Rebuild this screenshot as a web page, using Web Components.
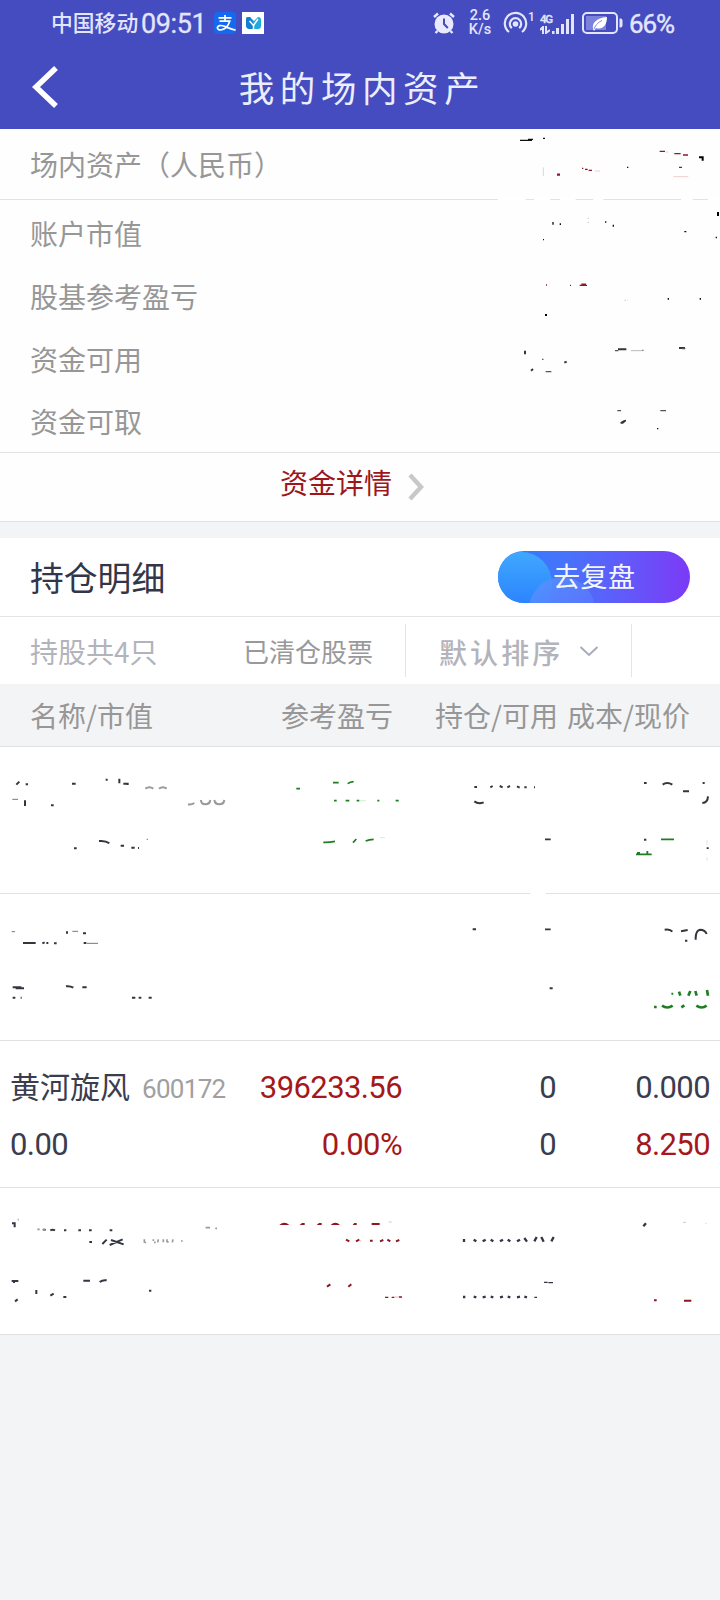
<!DOCTYPE html>
<html lang="zh-CN">
<head>
<meta charset="utf-8">
<title>我的场内资产</title>
<style>
html,body{margin:0;padding:0}
body{width:720px;height:1600px;overflow:hidden;background:#f3f4f6;font-family:Roboto,"Noto Sans CJK SC",sans-serif;color:#3a3d4e}
</style>
</head>
<body>
<asset-page></asset-page>
<script>
const define = (name, html) => {
  const t = document.createElement('template');
  t.innerHTML = html;
  customElements.define(name, class extends HTMLElement {
    constructor() {
      super();
      this.attachShadow({ mode: 'open' }).append(t.content.cloneNode(true));
    }
  });
};

define('status-bar', `
<style>
:host{display:flex;height:46px;padding-left:51px;align-items:center;color:#e3e5fd;box-sizing:border-box;white-space:nowrap}
span,svg{flex:none;display:block}
.op{width:90px;font:500 21.8px/30px "Noto Sans CJK SC",sans-serif;margin-top:-2px}
.time{width:73px;font:400 27px/30px Roboto,sans-serif;letter-spacing:-.4px;-webkit-text-stroke:.3px;margin-top:1px}
.rate{width:28px;margin-left:2px;text-align:center;font:500 14.5px/14.5px Roboto,sans-serif;margin-right:2px}
.rate span{height:14.5px}
.net{width:12px;display:flex;flex-direction:column}
.net span{font:500 11.5px/12px Roboto,sans-serif;letter-spacing:-1.3px;-webkit-text-stroke:.3px}
.one{font:500 12px/12px Roboto,sans-serif;width:12px;align-self:flex-start;margin-top:11px}
.pct{font:400 26px/30px Roboto,sans-serif;letter-spacing:-1.1px;-webkit-text-stroke:.4px;margin-top:2px}
</style>
<span class="op">中国移动</span><span class="time">09:51</span>
<svg width="22" height="22" viewBox="0 0 22 22"><rect width="22" height="22" rx="4" fill="#1669ef"/><path d="M4.500 5.800h13M11 3v6M5.500 9.200h10.200c-1.300 4-4.200 7.800-7.800 8.500-3 .5-4.700-.6-4.500-2.200.3-2 3.400-2.500 6.200-1.500 3.500 1.200 7 3.300 12 4.200" fill="none" stroke="#fff" stroke-width="1.700"/></svg>
<svg width="22" height="22" viewBox="0 0 22 22" style="margin:0 170px 0 6px"><path fill="#fff" d="M0 0h22v22H0z"/><path d="M4 7q0-2 2-2h2l4 4 4-4q3 0 3 3v6q0 3-3 3H8q-4 0-4-4z" fill="#20a9df"/><path d="M4 7q0-2 2-2h2l3 5v7H8q-4 0-4-4z" fill="#147fd0"/><path d="M7.500 9 11.500 13.500 16 7M11.500 13v4" fill="none" stroke="#fff" stroke-width="1.500"/></svg>
<svg width="22" height="22" viewBox="0 0 22 22" style="margin-left:-1px"><circle cx="11" cy="12" r="9.500" fill="#e9eaff"/><path d="M1 5 5 1.500M21 5 17 1.500M4.500 19 2.500 21M17.500 19l2 2" stroke="#e9eaff" stroke-width="2.400"/><path d="M11 6.500V12l3.800 4" fill="none" stroke="#444cbf" stroke-width="2"/></svg>
<svg width="9" height="1"></svg>
<span class="rate"><span>2.6</span><span>K/s</span></span>
<svg width="25" height="24" viewBox="0 0 25 24" style="margin-left:7px" fill="none" stroke="#e3e5fd" stroke-width="2.200"><circle cx="12.500" cy="13" r="2.800" fill="#e3e5fd" stroke="none"/><path d="M8.800 17.200A5.700 5.700 0 1 1 16.200 17.200M6 21A10.700 10.700 0 1 1 19 21"/></svg>
<span class="one">1</span>
<span class="net"><span>4G</span><svg width="10" height="8" viewBox="0 0 10 8" style="margin-top:1px"><path d="M3 8V1L0 4M6 0v7l4-3" fill="none" stroke="#e3e5fd" stroke-width="2"/></svg></span>
<svg width="22" height="21" viewBox="0 0 22 21" fill="#e3e5fd" style="margin-right:8px"><path d="M0 18h2.500v3H0zM4 15h3v6H4zM9 11h3v10H9zM14 6h3v15h-3zM19 1h3v20h-3z"/></svg>
<svg width="41" height="22" viewBox="0 0 41 22"><rect x="1" y="1" width="34" height="20" rx="4" fill="none" stroke="#e3e5fd" stroke-width="2"/><path fill="#7c82db" d="M4 4h20v14H4z"/><path d="M37.500 6.500h1q2 0 2 2v5q0 2-2 2h-1z" fill="#e3e5fd"/><path d="M11 17c-1-6 3-11 14-12 0 9-5 13-11 11l-2 3zM13 15c2-4 5-6 8-7" fill="#fff"/><path d="M12 17c2-5 5-7 8-8.500" fill="none" stroke="#7c82db"/></svg>
<span class="pct" style="margin-left:6px">66%</span>
`);

define('nav-header', `
<style>
:host{display:grid;grid-template-columns:60px 1fr 60px;height:83px;align-items:center}
svg{display:block;margin:-1px 0 0 32px}
h1{margin:-2px 0 0;text-align:center;color:#eceefe;font:400 35.500px/50px "Noto Sans CJK SC",sans-serif;letter-spacing:5.600px;padding-left:4px}
</style>
<svg width="27" height="42" viewBox="0 0 27 42"><path d="M24 2 4 21 24 40" fill="none" stroke="#fff" stroke-width="5.500"/></svg>
<h1><slot></slot></h1>
`);

define('summary-row', `
<style>
:host{display:flex;height:63px;align-items:center;padding-left:30px;font:400 28px/40px "Noto Sans CJK SC",sans-serif;color:#979797}
:host([lead]){height:70px;border-bottom:1px solid #e2e3e6}
</style>
<slot></slot>
`);

define('detail-link', `
<style>
:host{display:flex;height:68px;border-top:1px solid #e2e3e6;border-bottom:1px solid #e0e1e4;padding-left:280px;color:#9c161b;font:400 28px/58px "Noto Sans CJK SC",sans-serif}
svg{margin:20px 0 0 15px}
</style>
<slot></slot><svg width="18" height="28" viewBox="0 0 18 28"><path d="M3 2 14 14 3 26" fill="none" stroke="#c8c8c8" stroke-width="4.400"/></svg>
`);

define('review-button', `
<style>
:host{display:block;position:relative;width:192px;height:52px;border-radius:26px;overflow:hidden;background:linear-gradient(90deg,#2c7dff,#4773fb 35%,#615afa 66%,#7c3af6)}
svg{position:absolute;inset:0}
span{position:relative;display:block;padding-left:55px;color:#f4f6ff;font:400 27px/49px "Noto Sans CJK SC",sans-serif;letter-spacing:.5px}
</style>
<svg width="192" height="52"><defs><linearGradient id="a" x2="0" y2="1"><stop stop-color="#40a8ff"/><stop offset="1" stop-color="#277dfe"/></linearGradient><linearGradient id="b" x2="1" y2="1"><stop stop-color="#5796ff"/><stop offset="1" stop-color="#5d68fc"/></linearGradient></defs><circle cx="23" cy="32" r="31" fill="url(#a)"/><circle cx="64" cy="59" r="33" fill="url(#b)" opacity=".8"/></svg>
<span><slot></slot></span>
`);

define('section-title', `
<style>
:host{display:flex;height:78px;align-items:center;justify-content:space-between;padding:0 30px;border-bottom:1px solid #e3e4e7;background:#fff}
h2{margin:-1px 0 0;font:400 33.800px/50px "Noto Sans CJK SC",sans-serif;color:#333648}
</style>
<h2><slot></slot></h2><slot name="action"></slot>
`);

define('filter-bar', `
<style>
:host{display:grid;grid-template-columns:243px 162px 225px 1fr;height:67px;background:#fff;align-items:center;box-sizing:border-box;font:400 28px/40px "Noto Sans CJK SC",sans-serif;color:#b3b3bb}
.count{padding-left:30px}
.closed{font-size:26px;color:#999}
.sort{height:53px;display:flex;align-items:center;border:solid #e4e4e8;border-width:0 1px;padding:4px 0 0 33px;margin-top:-1px;letter-spacing:3.100px;box-sizing:border-box;font-weight:500;width:227px}
svg{margin:-2px 0 0 16px}
</style>
<span class="count">持股共4只</span><span class="closed">已清仓股票</span>
<span class="sort">默认排序<svg width="20" height="13" viewBox="0 0 20 13"><path d="M1.500 2 10 10 18.500 2" fill="none" stroke="#a7acb9" stroke-width="2"/></svg></span>
`);

define('column-heads', `
<style>
:host{display:grid;grid-template-columns:251px 154px 132px 1fr;height:62px;align-items:center;padding-left:30px;border-bottom:1px solid #e0e1e4;font:400 28px/40px "Noto Sans CJK SC",sans-serif;color:#979797;white-space:nowrap}
</style>
<span>名称/市值</span><span>参考盈亏</span><span>持仓/可用</span><span>成本/现价</span>
`);

define('holding-row', `
<style>
:host{display:grid;grid-template-columns:231px 161px 154px 154px;grid-template-rows:57px 57px;height:147px;padding:18px 10px 14px 10px;box-sizing:border-box;align-items:center;border-bottom:1px solid #e0e1e4;background:#fff;font:400 31px/40px Roboto,"Noto Sans CJK SC",sans-serif;letter-spacing:-.6px;text-align:right}
::slotted(*){white-space:nowrap}
::slotted(.name){text-align:left}
</style>
<slot></slot>
`);

define('stock-name', `
<style>
:host{display:flex;align-items:baseline;font:400 30px/40px "Noto Sans CJK SC",sans-serif;letter-spacing:0;margin-top:-5px}
small{font:400 26px/30px Roboto,sans-serif;color:#a0a0a0;margin-left:12px;letter-spacing:-.7px}
</style>
<slot></slot><small><slot name="code"></slot></small>
`);

/* What is left visible of the hidden amounts in the summary. */
define('summary-traces', `
<style>
:host{display:block;position:absolute;inset:0}
svg{display:block}
</style>
<svg width="720" height="324" viewBox="0 0 2160 972" fill="none" stroke-width="4">
<g transform="translate(1440,-12)">
<path stroke="#fff" stroke-width="7" d="M54 223h83M162 223h49M240 223h47M340 223h30M603 223h35M684 223h36"/>
<path stroke="#111" d="M120 46h36M144 43h15M189 40h6M441 127h4M613 320h6M189 344h3M709 335v5M197 567v6M219 291v8M241 295v5M377 289v4M400 299v6M565 519v5M661 519v5M187 703h3M487 676h3M531 911h4"/>
<path stroke="#000" stroke-width="6" d="M657 97h11v10M195 570h6"/>
<path fill="#000" d="M711 261h6v12h-6z"/>
<path stroke="#34343a" stroke-width="6" d="M135 677v11M153 737l6-5M253 713l7-3M414 673h25M597 669h18"/>
<path fill="#34343a" d="M421 892l10-6 7-2v5l-9 7h-7z"/>
<path stroke="#55555a" d="M405 677h10M197 740h17M412 857h11M541 857h17M606 671h10"/>
<path stroke="#bbb" stroke-width="3" d="M453 677h35"/>
<path stroke="#8c1a27" stroke-width="4" d="M539 79h16M583 86h19M609 90h15M597 127h9M299 481h22M198 480h3M306 130h4M315 133h8M326 136h10M270 481h3"/>
<path stroke="#8c1a27" stroke-width="7" d="M231 149h9M304 479h14"/>
<path stroke="#f4ccd0" stroke-width="3" d="M190 127v26M580 155h45M558 81h7M345 138h15"/>
<path stroke="#ccc" d="M325 278v3M325 291v3M436 524v4M443 524v2"/>
</g></svg>
`);

/* What is left visible of the hidden holdings. */
define('holding-traces', `
<style>
:host{display:block;position:absolute;inset:0}
svg{display:block}
</style>
<svg width="720" height="588" viewBox="0 0 2160 1764" fill="none">
<g transform="translate(0,39)">
<path stroke="#34353d" stroke-width="6" d="M49 74l9-9M77 73h7M216 71h11M317 59h6M358 56v14M370 71h13v4M75 121v17M153 136h8M297 243q20-2 31 7M222 265h8M362 257h10M394 263h10M414 264h3M201 514v7M249 520h9M69 549h38M127 550l7-3M142 546v6M162 550h8M251 549h8M41 679v6M42 682h22M47 685h25M198 679q12-2 22 4M247 682h13M38 713h8M62 713h3M396 713h10M416 713h8M446 713h9"/>
<path stroke="#777" stroke-width="3" d="M37 118h17M35 515h10M217 514h17M260 550h34M440 238h4"/>
<path stroke="#999" stroke-width="6" d="M436 86q12-8 24 0M477 86q12-8 23 0M603 120q0 13 13 13t15-13M643 120q2 13 15 13t15-13M564 133q10 2 19-4"/>
<path stroke="#1f7d22" stroke-width="5" d="M889 86h11M999 68h17M1043 71q7-5 18-6M1002 122h8M1037 122h11M1070 122h8M970 247q15 1 35-3M1059 248l10-11"/>
</g>
<g transform="translate(1080,39)">
<path stroke="#fff" stroke-width="7" d="M511 400h46"/>
<path stroke="#34353d" stroke-width="6" d="M343 81h8M391 82l7-4M419 78l9 4M442 82l8-4M471 79l8 4M493 82h7M522 82h3M343 124q12 9 28 3M852 69h8M908 74q13-10 29 0M969 94h18M1028 69h6M1027 129q16-1 17-20M338 508h10M914 509q16-3 23 6M963 514l20-4M975 542h7M1007 539q-1-27 13-30 15 0 20 13M569 685h9M852 239h7M1043 262v5"/>
<path stroke="#34353d" stroke-width="5" d="M555 238h17M555 508h17"/>
<path stroke="#1f7d22" stroke-width="5.500" d="M52 122h6M107 122h9M17 243q10-5 24-5M903 238h39M828 283h47M831 279h9M862 273v10M937 698v6"/>
<path stroke="#1f7d22" stroke-width="8" d="M957 695l4 12M991 693l-6 14M1006 693l4 14M1041 690l3 17M882 741h8M906 737q16 11 32 0M964 742l9-6M1009 737q16 11 31 0"/>
<path stroke="#d5efd5" stroke-width="3" d="M0 122h18M60 233h15M1041 240v15M1041 291v12"/>
</g>
<g transform="translate(0,1359)">
<path stroke="#343743" stroke-width="6" d="M36 70h8v12M130 89h7M151 91q7-4 14 0M192 91h7M235 91h8M267 91h8M329 91h8M268 126h8M307 132l13-13M333 120l38 13M329 135l39-17M35 243h20M39 246h6M250 242h20M299 246q9-7 21-5M109 270v12M151 287l10-6M190 291h9M45 304l8-6M447 272h7"/>
<path stroke="#999" stroke-width="5" d="M112 88h7M127 89h8M433 118v8l5 2M462 127h5M475 118l-2 9M490 118v9M501 118v7l5 2M519 118l-2 9M543 123h5M460 118v5M617 83h13M646 85h5M53 59h3"/>
<path fill="#8e171f" d="M838 75q15-13 30 0zM899 75l7-6h8v6zM950 75l7-6h8v6zM992 75q14-13 28 0zM1058 75l5-6h7v6z"/>
<path stroke="#8e171f" stroke-width="6" d="M1038 119l10 5M1068 124l10-5M981 260l10-7M1045 260l9-7"/>
</g>
<g transform="translate(1080,1359)">
<path stroke="#343743" stroke-width="7" d="M312 117v9M341 119l8 5M368 124l9-5M392 119l8 5M420 124l9-5M443 119l8 5M471 124l9-5M493 114l8 11M523 124l7-13M544 111l7 14M574 124l7-13M309 291h7M341 290l8 2M368 292l9-2M392 290l8 2M420 292l9-2M443 290l8 2M471 292l9-2M493 290l8 2M850 79l8-9"/>
<path stroke="#343743" stroke-width="4" d="M523 292h8M552 247h11M565 248h14"/>
<path stroke="#ccc" stroke-width="3" d="M86 66h9M969 67h9M1036 70h3"/>
<path stroke="#8e171f" stroke-width="6" d="M35 72h24M30 122h8M60 124l10-4M82 119l9 5M108 124l10-4M882 301h8M972 302h22"/>
<path stroke="#8e171f" stroke-width="4" d="M75 292h10M95 292h8M117 291h9"/>
<path stroke="#efb5b5" stroke-width="3" d="M103 291h14M0 123h4"/>
</g></svg>
`);

define('asset-page', `
<style>
:host{display:flex;flex-direction:column;height:1600px;background:#f3f4f6}
header{background:#444cbf;height:129px}
.summary{position:relative;background:#fefefe;height:393px}
.rows{height:251px;padding-top:1px}
.rows summary-row:last-child{height:62px}
.holdings{margin-top:16px}
.list{position:relative}
.red{color:#a5171a}
</style>
<header><status-bar></status-bar><nav-header>我的场内资产</nav-header></header>
<section class="summary">
<summary-row lead>场内资产（人民币）</summary-row>
<div class="rows"><summary-row>账户市值</summary-row><summary-row>股基参考盈亏</summary-row><summary-row>资金可用</summary-row><summary-row>资金可取</summary-row></div>
<detail-link>资金详情</detail-link>
<summary-traces></summary-traces>
</section>
<section class="holdings">
<section-title>持仓明细<review-button slot="action">去复盘</review-button></section-title>
<filter-bar></filter-bar>
<column-heads></column-heads>
<div class="list">
<holding-row></holding-row>
<holding-row></holding-row>
<holding-row>
<stock-name class="name">黄河旋风<span slot="code">600172</span></stock-name><span class="red">396233.56</span><span>0</span><span>0.000</span>
<span class="name">0.00</span><span class="red">0.00%</span><span>0</span><span class="red">8.250</span>
</holding-row>
<holding-row></holding-row>
<holding-traces></holding-traces>
</div>
</section>
`);
</script>
</body>
</html>
